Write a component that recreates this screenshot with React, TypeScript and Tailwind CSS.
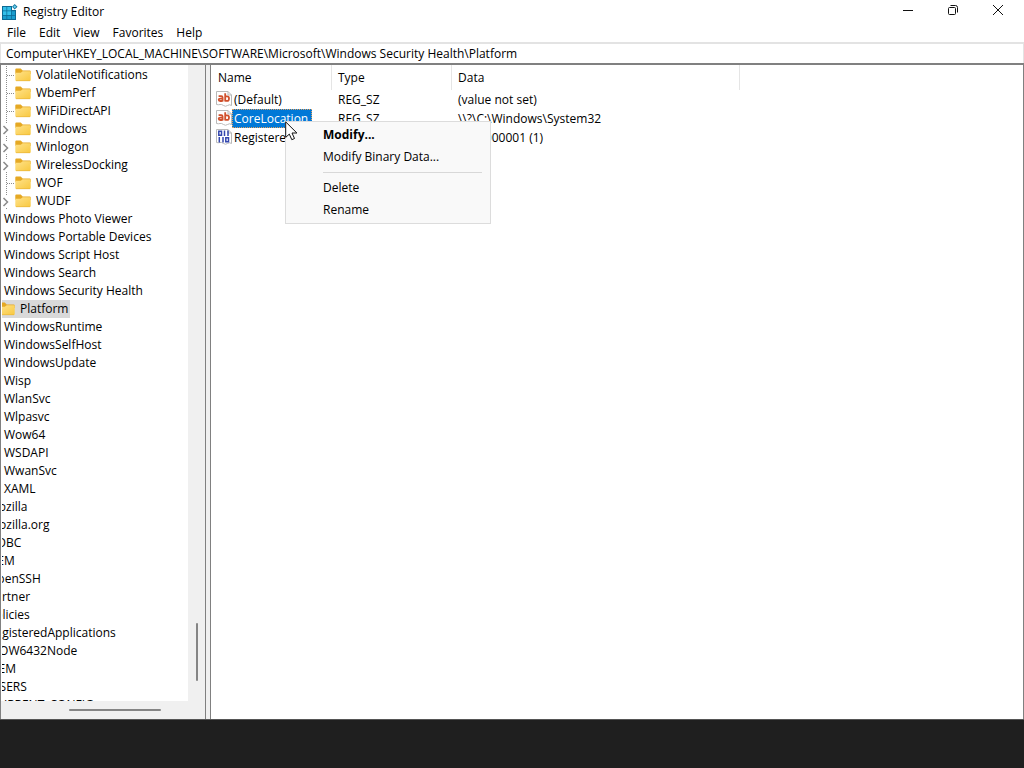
import { useState } from 'react'
import type { ReactNode } from 'react'

interface TreeItem {
  name: string
  level: string
  expandable?: boolean
  selected?: boolean
}

interface RegValue {
  name: string
  kind: 'string' | 'binary'
  type: string
  data: string
}

const LEVELS = ['pl-0', 'pl-4', 'pl-8', 'pl-12', 'pl-16', 'pl-20']

function keys(depth: number, names: string[]): TreeItem[] {
  return names.map((name) => ({ name, level: LEVELS[depth] }))
}

const TREE: TreeItem[] = [
  ...keys(5, ['VolatileNotifications', 'WbemPerf', 'WiFiDirectAPI']),
  { name: 'Windows', level: LEVELS[5], expandable: true },
  { name: 'Winlogon', level: LEVELS[5], expandable: true },
  { name: 'WirelessDocking', level: LEVELS[5], expandable: true },
  { name: 'WOF', level: LEVELS[5] },
  { name: 'WUDF', level: LEVELS[5], expandable: true },
  ...keys(3, [
    'Windows Photo Viewer',
    'Windows Portable Devices',
    'Windows Script Host',
    'Windows Search',
    'Windows Security Health',
  ]),
  { name: 'Platform', level: LEVELS[4], selected: true },
  ...keys(3, [
    'WindowsRuntime',
    'WindowsSelfHost',
    'WindowsUpdate',
    'Wisp',
    'WlanSvc',
    'Wlpasvc',
    'Wow64',
    'WSDAPI',
    'WwanSvc',
    'XAML',
  ]),
  ...keys(2, [
    'Mozilla',
    'mozilla.org',
    'ODBC',
    'OEM',
    'OpenSSH',
    'Partner',
    'Policies',
    'RegisteredApplications',
    'WOW6432Node',
  ]),
  ...keys(1, ['SYSTEM']),
  ...keys(0, ['HKEY_USERS', 'HKEY_CURRENT_CONFIG']),
]

const VALUES: RegValue[] = [
  { name: '(Default)', kind: 'string', type: 'REG_SZ', data: '(value not set)' },
  { name: 'CoreLocation', kind: 'string', type: 'REG_SZ', data: '\\\\?\\C:\\Windows\\System32' },
  { name: 'Registered', kind: 'binary', type: 'REG_DWORD', data: '0x00000001 (1)' },
]

function AppIcon() {
  return (
    <svg width="16" height="16" viewBox="0 0 16 16" aria-hidden="true">
      <path d="M0 2h10v4h4v10H0z" fill="#0d6a94" />
      <path d="M1 3h3.500v3.500H1zM5.200 3H9v3.500H5.200zM1 7.300h3.500v3.700H1zM5.200 7.300H9V11H5.200z" fill="#35c0ea" />
      <path d="M9.700 7.300H13V11H9.700zM1 11.700h3.500V15H1zM5.200 11.700H9V15H5.200zM9.700 11.700H13V15H9.700z" fill="#1a9dce" />
      <path d="M12.700 0l2.800 2.700-2.800 2.800L10 2.700z" fill="#17789f" />
      <path d="M12.700 1.300l1.500 1.400-1.500 1.500-1.400-1.500z" fill="#6bd3f2" />
    </svg>
  )
}

function FolderIcon() {
  return (
    <svg width="16" height="18" viewBox="0 0 16 18" className="shrink-0" aria-hidden="true">
      <defs>
        <linearGradient id="folder" x1="0" y1="0" x2="1" y2="1">
          <stop offset="0" stopColor="#ffe28a" />
          <stop offset="1" stopColor="#f8c83f" />
        </linearGradient>
      </defs>
      <path d="M.3 3.500q0-1 1-1h4.400l2 2h7q1 0 1 1V8H.3z" fill="#e5a823" />
      <path d="M.3 6.800h5.500l1.900-1.500h7q1 0 1 1V14q0 1-1 1H1.300q-1 0-1-1z" fill="url(#folder)" />
      <path d="M1 14.700h14" stroke="#e9b43a" strokeWidth=".7" />
    </svg>
  )
}

function Branch({ expandable }: { expandable?: boolean }) {
  return (
    <svg width="15" height="18" viewBox="0 0 15 18" className="shrink-0" aria-hidden="true">
      {expandable ? (
        <>
          <path d="M6.500 0v4M6.500 16v2" stroke="#8c8c8c" strokeDasharray="1 1" />
          <path d="M3.500 6l4 4-4 4" fill="none" stroke="#8a8a8a" strokeWidth="1.500" />
        </>
      ) : (
        <path d="M6.500 0v18M7 9.500h7" fill="none" stroke="#8c8c8c" strokeDasharray="1 1" />
      )}
    </svg>
  )
}

function ValueIcon({ kind }: { kind: RegValue['kind'] }) {
  return (
    <svg width="16" height="16" viewBox="0 0 16 16" className="mb-0.5 shrink-0" aria-hidden="true">
      <path
        d="M.5.500h11.500l3.500 3.500v10.500q-2-1.500-4 0t-4 0-3.500-1-3.500 0z"
        fill="#fff"
        stroke="#b9b9b9"
      />
      <path d="M12 .500V4h3.500" fill="none" stroke="#b9b9b9" />
      {kind === 'string' ? (
        <g fill="none" stroke="#d0502c" strokeWidth="1.800">
          <path d="M2.600 5.200h2.700q1.300 0 1.300 1.300v4M6.500 7.600H4.200q-1.500 0-1.500 1.200t1.500 1.200h2.300" />
          <path d="M9.200 2.300v8.200M9.200 5.300h1.900q1.900 0 1.900 2.300T11.100 9.900H9.200" />
        </g>
      ) : (
        <g fill="none" stroke="#3346ae" strokeWidth="1.500">
          <path d="M2.800 2.300h2.700v3.900H2.800zM8.500 1.500V7M12 1.500V7M3.300 8v5.500M7 8v5.500M9.800 8.800h2.700v3.900H9.800z" />
        </g>
      )}
    </svg>
  )
}

function CaptionButton({ label, children }: { label: string; children: ReactNode }) {
  return (
    <button aria-label={label} className="flex h-6 w-[45px] items-center justify-center pb-1 hover:bg-gray-200">
      <svg width="12" height="12" viewBox="0 0 12 12" fill="none" stroke="#111">
        {children}
      </svg>
    </button>
  )
}

function ContextMenu() {
  return (
    <div
      role="menu"
      className="absolute left-[74px] top-14 w-[206px] border border-[#dcdcdc] bg-[#f9f9f9] pb-0.5 pt-0.5"
    >
      <button role="menuitem" className="block h-[22px] w-full pl-[37px] text-left font-bold hover:bg-gray-200">
        Modify...
      </button>
      <button role="menuitem" className="block h-[22px] w-full pl-[37px] text-left hover:bg-gray-200">
        Modify Binary Data...
      </button>
      <div role="separator" className="mb-1 ml-[37px] mr-2 mt-1 h-px bg-[#d8d8d8]" />
      <button role="menuitem" className="block h-[22px] w-full pl-[37px] text-left hover:bg-gray-200">
        Delete
      </button>
      <button role="menuitem" className="block h-[22px] w-full pl-[37px] text-left hover:bg-gray-200">
        Rename
      </button>
      <svg width="13" height="20" viewBox="0 0 13 20" className="absolute -left-px -top-px" aria-hidden="true">
        <path d="M.7.900v15.500l3.600-3.300 2.500 5.600 2.700-1.200L7 12h4.900z" fill="#fff" stroke="#111" />
      </svg>
    </div>
  )
}

export default function App() {
  const [path, setPath] = useState(
    'Computer\\HKEY_LOCAL_MACHINE\\SOFTWARE\\Microsoft\\Windows Security Health\\Platform',
  )

  return (
    <div className="flex h-screen flex-col overflow-hidden bg-white font-['Open_Sans','Noto_Sans',sans-serif] text-[12px] leading-[18px] text-black">
      {/* Title bar */}
      <header className="flex h-6 shrink-0 items-center pr-1">
        <div className="flex flex-1 items-center gap-1 pl-0.5">
          <AppIcon />
          <h1 className="pl-px">Registry Editor</h1>
        </div>
        <CaptionButton label="Minimize">
          <path d="M1 6.500h10" />
        </CaptionButton>
        <CaptionButton label="Restore">
          <rect x="1.500" y="3.500" width="7" height="7" rx="1" />
          <path d="M3.500 1.500h5q2 0 2 2v5" />
        </CaptionButton>
        <CaptionButton label="Close">
          <path d="M1 1l10 10M11 1L1 11" />
        </CaptionButton>
      </header>

      <nav className="flex h-[18px] shrink-0 gap-[13px] pl-[7px]">
        {['File', 'Edit', 'View', 'Favorites', 'Help'].map((item) => (
          <button key={item} className="hover:bg-gray-200">
            {item}
          </button>
        ))}
      </nav>

      <input
        aria-label="Registry path"
        value={path}
        onChange={(e) => setPath(e.target.value)}
        className="h-[21px] w-full shrink-0 border border-t-2 border-b-0 border-[#e3e3e3] bg-white pl-[5px] outline-none"
      />

      <div className="flex min-h-0 flex-1 border-t-2 border-[#808080]">
        {/* Key tree */}
        <aside className="flex w-[206px] shrink-0 flex-col border-x border-[#808080] bg-[#f0f0f0]">
          <div className="flex min-h-0 flex-1">
            <div className="min-w-0 flex-1 border-l border-white bg-white">
              <div className="h-full overflow-hidden pt-px">
                <ul role="tree" aria-label="Registry keys" className="-ml-[82px]">
                  {TREE.map((item) => (
                    <li key={item.name} role="treeitem" aria-selected={!!item.selected} className={`flex ${item.level}`}>
                      <Branch expandable={item.expandable} />
                      <span className={`flex gap-[5px] whitespace-nowrap ${item.selected ? 'bg-[#d9d9d9] pr-0.5' : ''}`}>
                        <FolderIcon />
                        {item.name}
                      </span>
                    </li>
                  ))}
                </ul>
              </div>
            </div>
            <div className="flex w-[17px] flex-col items-center justify-end pb-5">
              <div className="h-[58px] w-0.5 rounded-full bg-[#858585]" />
            </div>
          </div>
          <div className="flex h-[18px] shrink-0 items-center pl-[68px]">
            <div className="h-0.5 w-[92px] rounded-full bg-[#858585]" />
          </div>
        </aside>

        <div className="w-1 shrink-0 bg-[#f0f0f0]" />

        {/* Values of the selected key */}
        <main className="relative min-w-0 flex-1 border-x border-[#808080]">
          <table className="w-full table-fixed border-separate border-spacing-0 text-left">
            <thead>
              <tr className="h-[25px]">
                <th className="w-[121px] border-r border-[#e5e5e5] p-0 pl-[7px] font-normal">Name</th>
                <th className="w-[120px] border-r border-[#e5e5e5] p-0 pl-1.5 font-normal">Type</th>
                <th className="w-72 border-r border-[#e5e5e5] p-0 pl-1.5 font-normal">Data</th>
                <th />
              </tr>
            </thead>
            <tbody>
              {VALUES.map((v) => (
                <tr key={v.name} className="h-[19px]">
                  <td className="p-0 pl-[5px]">
                    <div className="flex items-center leading-[19px]">
                      <ValueIcon kind={v.kind} />
                      <span
                        className={
                          v.name === 'CoreLocation'
                            ? 'bg-[#0078d7] pl-0.5 pr-1 text-white outline-1 -outline-offset-1 outline-dotted outline-[#e0a060]'
                            : 'pl-0.5'
                        }
                      >
                        {v.name}
                      </span>
                    </div>
                  </td>
                  <td className="p-0 pl-1.5">{v.type}</td>
                  <td className="p-0 pl-1.5">{v.data}</td>
                  <td />
                </tr>
              ))}
            </tbody>
          </table>
          <ContextMenu />
        </main>
      </div>

      <footer className="h-[49px] shrink-0 border-t border-[#555] bg-[#1f1f1f]" />
    </div>
  )
}
